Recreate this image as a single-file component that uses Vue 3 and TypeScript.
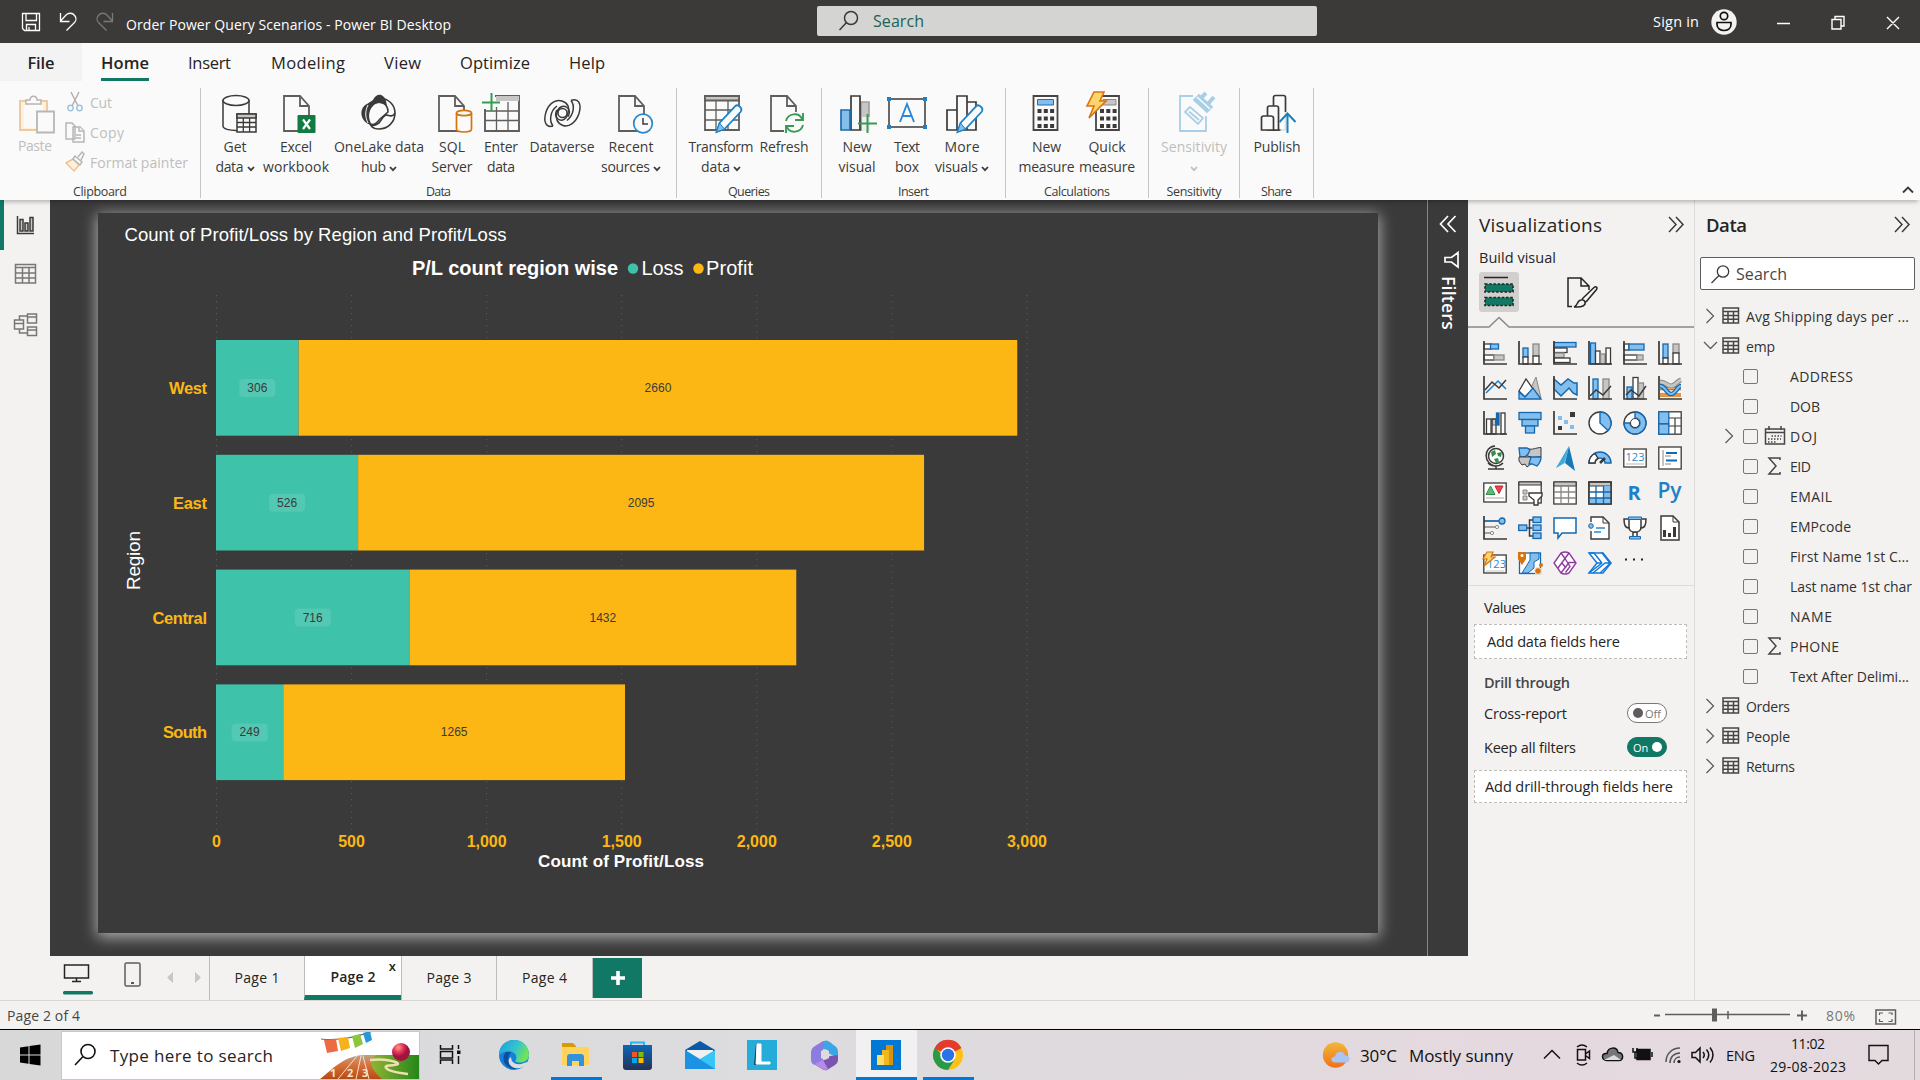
<script setup lang="ts">
interface Cmd { icon: string; w: number; l1: string; f1: number; l2?: string; f2?: number; chev?: boolean; off?: boolean }
interface Group { name: string; fit: number; w: number; pad: number; cmds: Cmd[] }

/* Spreads the letters of a label so that it fills the given width */
const vFit = {
  mounted(el: HTMLElement, binding: { value?: number }) {
    if (!binding.value) return
    const n = (el.textContent ?? '').trim().length
    if (n < 2) return
    const gap = (binding.value - el.getBoundingClientRect().width) / (n - 1)
    el.style.letterSpacing = gap + 'px'
    el.style.marginRight = -gap + 'px'
  },
}

const tabs = [
  { t: 'Home', x: 19, f: 48, on: true },
  { t: 'Insert', x: 39, f: 43 },
  { t: 'Modeling', x: 40, f: 74 },
  { t: 'View', x: 39, f: 37 },
  { t: 'Optimize', x: 39, f: 70 },
  { t: 'Help', x: 39, f: 36 },
]

const K = '#3b3a39'
const groups: Group[] = [
  { name: 'Data', fit: 25, w: 476, pad: 6, cmds: [
    { icon: 'getdata', w: 56, l1: 'Get', f1: 23, l2: 'data', f2: 28, chev: true },
    { icon: 'excel', w: 66, l1: 'Excel', f1: 32, l2: 'workbook', f2: 66 },
    { icon: 'onelake', w: 100, l1: 'OneLake data', f1: 90, l2: 'hub', f2: 25, chev: true },
    { icon: 'sql', w: 46, l1: 'SQL', f1: 26, l2: 'Server', f2: 41 },
    { icon: 'enter', w: 52, l1: 'Enter', f1: 34, l2: 'data', f2: 28 },
    { icon: 'dataverse', w: 70, l1: 'Dataverse', f1: 65 },
    { icon: 'recent', w: 68, l1: 'Recent', f1: 45, l2: 'sources', f2: 49, chev: true },
  ] },
  { name: 'Queries', fit: 42, w: 145, pad: 8, cmds: [
    { icon: 'transform', w: 72, l1: 'Transform', f1: 65, l2: 'data', f2: 29, chev: true },
    { icon: 'refresh', w: 54, l1: 'Refresh', f1: 49 },
  ] },
  { name: 'Insert', fit: 31, w: 184, pad: 11, cmds: [
    { icon: 'newvisual', w: 48, l1: 'New', f1: 29, l2: 'visual', f2: 37 },
    { icon: 'textbox', w: 52, l1: 'Text', f1: 26, l2: 'box', f2: 24 },
    { icon: 'more', w: 58, l1: 'More', f1: 35, l2: 'visuals', f2: 43, chev: true },
  ] },
  { name: 'Calculations', fit: 66, w: 143, pad: 10, cmds: [
    { icon: 'calc', w: 61, l1: 'New', f1: 29, l2: 'measure', f2: 56 },
    { icon: 'quick', w: 60, l1: 'Quick', f1: 37, l2: 'measure', f2: 56 },
  ] },
  { name: 'Sensitivity', fit: 55, w: 91, pad: 6, cmds: [
    { icon: 'sens', w: 78, l1: 'Sensitivity', f1: 66, l2: '', chev: true, off: true },
  ] },
  { name: 'Share', fit: 31, w: 74, pad: 4, cmds: [
    { icon: 'publish', w: 66, l1: 'Publish', f1: 47 },
  ] },
]

const calcKeys = (x: number) => [16, 23.5, 31].map(y => [0, 6.3, 12.6].map(d => `<rect x="${x + d}" y="${y}" width="4" height="4" fill="${K}"/>`).join('')).join('')
const page = (x: number, w = 26) => `<path d="M${x + 1} 3h${w - 10}l9 10v25h-${w - 1}z" fill="#fafafa" stroke="#605e5c" stroke-width="1.8"/><path d="M${x + w - 9} 3v10h9" fill="none" stroke="#605e5c" stroke-width="1.8"/>`
const pencil = (x: number, y: number) => `<g transform="translate(${x} ${y})"><path d="M1 27l3-9L20 1c2-2 8 2 5 6L9 24z" fill="#fafafa" stroke="#1b81c8" stroke-width="1.8"/><path d="M1 27l3-9 5 6z" fill="#83beec" stroke="#1b81c8"/></g>`

const ribbonIcons: Record<string, string> = {
  getdata: `<g fill="#fafafa" stroke="${K}" stroke-width="1.5"><path d="M8 7v26c0 6 26 6 26 0V7"/><ellipse cx="21" cy="7.5" rx="13" ry="5"/><path d="M22 21h19v18H22z"/><path d="M22 21h19v4H22z" fill="#c8c6c4"/><path d="M22 29.500h19M22 34h19M28.300 25v14M34.600 25v14" stroke-width="1.300"/></g>`,
  excel: page(7) + `<rect x="21.500" y="22" width="18" height="18" rx="1" fill="#107c41"/><path d="M27 26.500l7 9.500M34 26.500l-7 9.500" stroke="#fff" stroke-width="2.200"/>`,
  onelake: `<g fill="none" stroke="${K}" stroke-width="1.600"><path d="M21 5c10 1 15 8 15 15 0 9-7 16-16 16-3 0-6-1-8-3"/><path d="M11 14c2-4 8-6 13-4 4 2 5 6 5 9l-8 7c-3 4-6 7-10 5-5-3-5-12 0-17z" fill="#fafafa"/><path d="M36 20c-2 4-5 3-8 2-4 0-5 5-8 8-3 2-6 3-9 2" /></g><path d="M14 7c4-8 11-6 13 1l1 5c-5-4-11-4-14 0-5 5-5 13-1 19C1 30-1 15 8 11z" fill="${K}"/><path d="M9 12c-3 6-3 12 0 18" stroke="#fafafa" fill="none"/>`,
  sql: page(6) + `<g fill="#fafafa" stroke="#d8740e" stroke-width="1.700"><path d="M24.500 20v16c0 4 15 4 15 0V20"/><ellipse cx="32" cy="20" rx="7.500" ry="2.700"/></g>`,
  enter: `<g fill="#fafafa" stroke="#605e5c" stroke-width="1.900"><path d="M4 3h34v35H4z"/><path d="M15 3h23v5H15z" fill="#c8c6c4" stroke="none"/><path d="M4 18h34M4 27.500h34M15.500 14v24M27 9v29" stroke-width="1.300"/></g><path d="M0 0h14v16H0z" fill="#fafafa"/><path d="M10.500 0v18M1 9.500h18" stroke="#2f9e4f" stroke-width="2"/>`,
  dataverse: `<g fill="none" stroke="${K}" stroke-width="1.500"><path d="M29 7.500c7-3 11 3 8 13-3 9-10 14-16 12-6-2-8-8-6-13 1-5 6-8 10-5 3 2 3 6 1 9"/><path d="M11 33c-7 2-10-4-7-14 3-9 10-13 16-11 6 2 8 7 6 12-1 6-6 9-10 6-3-2-3-6-1-9"/><circle cx="20.500" cy="20" r="4.500"/><path d="M29 7.500c4 5 3 14-4 20M11 33c-4-5-3-15 4-20"/></g>`,
  recent: page(7) + `<circle cx="32" cy="30.500" r="9.300" fill="#fafafa" stroke="#2b88c8" stroke-width="1.700"/><path d="M32 25v6h5" fill="none" stroke="${K}" stroke-width="1.500"/>`,
  transform: `<g fill="#fafafa" stroke="#605e5c" stroke-width="1.800"><path d="M4 3h34v34H4z"/><path d="M4 3h34v4.500H4z" fill="#c8c6c4"/><path d="M4 17h34M4 27h34M15 8v29M27 8v29" stroke-width="1.300"/></g>` + pencil(14.500, 12),
  refresh: page(6) + `<path d="M20 19h22v22H20z" fill="#fafafa"/><g fill="none" stroke="#3a9a55" stroke-width="1.900"><path d="M22 28c2-8 13-9 16-2M39 32c-2 8-13 9-16 2"/><path d="M39 20v7h-8M22 40v-7h8"/></g>`,
  newvisual: `<g stroke-width="1.700"><path d="M24 9h8v28h-8z" fill="#c8c6c4" stroke="#a19f9d"/><path d="M14 3h9v34h-9z" fill="#fafafa" stroke="${K}"/><path d="M4 17h9v20H4z" fill="#83beec" stroke="#1f6cab"/></g><path d="M25 24h14v14H25z" fill="#fafafa" opacity=".8"/><path d="M30.500 21v19M21 30.500h19" stroke="#3a9a55" stroke-width="2"/>`,
  textbox: `<path d="M2 6h36v28H2z" fill="#fafafa" stroke="${K}" stroke-width="1.500"/><g fill="#1b81c8"><path d="M0 4h4v4H0zM36 4h4v4h-4zM0 32h4v4H0zM36 32h4v4h-4z"/></g><path d="M13 29l7-18 7 18M15.500 23h9" fill="none" stroke="#2b88d8" stroke-width="1.900"/>`,
  more: `<g fill="#fafafa" stroke="${K}" stroke-width="1.700"><path d="M25 9h9v28h-9zM15 3h10v34H15zM5 17h10v20H5z"/></g>` + pencil(14.500, 12),
  calc: `<g transform="translate(-1.500 0)"><path d="M8 3h24v34H8z" fill="#fafafa" stroke="#484644" stroke-width="1.800"/><path d="M12 6.500h16v5.500H12z" fill="#83beec" stroke="#1b6fb5"/>` + calcKeys(12) + '</g>',
  quick: `<path d="M9 3h23v34H9z" fill="#fafafa" stroke="#484644" stroke-width="1.800"/><path d="M16 6.500h13v5.500H16z" fill="#c8c6c4" stroke="#8a8886"/>` + calcKeys(13) + `<path d="M7 0h10l-4 9h6L2 26l5-12H0z" fill="#ffd56b" stroke="#d8740e" stroke-width="1.600" transform="translate(0 -1)"/>`,
  sens: `<g transform="translate(-1 0)" fill="none" stroke="#a9cfe6" stroke-width="1.800"><path d="M20 3H7v35h26V23"/><path d="M12 19l5-5 13 11-5 6z"/><path d="M16 18.500l10 8.500"/><path d="M21 7l5-5 13 12-5 5z" fill="#a9cfe6"/><path d="M27 6l6-6M33 13l8-9" stroke-width="4"/><path d="M24 4l13 12" stroke="#fafafa" stroke-width="1.600"/></g>`,
  publish: `<g transform="translate(-1.500 0)"><g fill="#fafafa" stroke="${K}" stroke-width="1.700"><path d="M18 4.500q0-2 2-2h8q2 0 2 2V37H18z"/><path d="M12 15q0-2 2-2h7q2 0 2 2v22H12z"/><path d="M6 25q0-2 2-2h7q3 0 3 2v12H6z"/></g><path d="M25 19h12v22H25z" fill="#fafafa" opacity=".85"/><path d="M32 40V22M24 29l8-8.500 8 8.500" fill="none" stroke="#1b81b8" stroke-width="2"/></g>`,
}

/* Gallery of visuals, drawn on a 24 x 24 grid */
const B = '#83beec', BS = '#1468b0', G = '#c8c6c4', GS = '#8a8886', D = '#3b3a39'
const r = (x: number, y: number, w: number, h: number, f: string, s: string) => `<rect x="${x}" y="${y}" width="${w}" height="${h}" fill="${f}" stroke="${s}" stroke-width="1.300"/>`
const axes = `<path d="M1 0v23h23" fill="none" stroke="${D}" stroke-width="1.700"/>`
const frame = (y = 2, h = 19) => r(.8, y, 22.400, h, '#fff', D)
const visuals: string[] = [
  r(1, 3, 7, 5, '#fff', D) + r(7.500, 3, 8, 5, B, BS) + r(1, 14, 10, 5, '#fff', D) + r(11, 14, 10, 5, G, GS) + axes,
  r(5, 7, 5, 9, B, BS) + r(5, 16, 5, 7, '#fff', D) + r(15, 3, 6, 12, G, GS) + r(15, 15, 6, 8, '#fff', D) + axes,
  r(1, 1.500, 22, 4.500, B, BS) + r(1, 7, 13, 4.500, '#fff', D) + r(1, 12, 10, 4.500, G, GS) + r(1, 17, 16, 4.500, '#fff', D) + axes,
  r(2.500, 2, 5, 21, B, BS) + r(7.500, 10, 4.500, 13, '#fff', D) + r(12.500, 13, 4.500, 10, G, GS) + r(18, 7, 4.500, 16, '#fff', D) + axes,
  r(1, 3, 5, 6, '#fff', D) + r(6, 3, 15, 6, B, BS) + r(1, 14, 13, 5, '#fff', D) + r(14, 14, 6, 5, G, GS) + axes,
  r(5, 3, 5, 14, B, BS) + r(5, 17, 5, 6, '#fff', D) + r(15, 3, 6, 9, G, GS) + r(15, 12, 6, 11, '#fff', D) + axes,
  `<g fill="none" stroke-width="1.500"><path d="M3 17L15 5l8 8" stroke="#1b81c8"/><path d="M2 14l7-8 7 6 7-8" stroke="${D}"/></g>` + axes,
  `<path d="M12 14L18 1l5 21z" fill="${G}" stroke="${GS}"/><path d="M1 15L8 3l7 10-8 8z" fill="#fff" stroke="${D}" stroke-width="1.300"/><path d="M1 23v-7l6 5 8-9 8 11z" fill="${B}" stroke="${BS}" stroke-width="1.300"/>`,
  `<path d="M1 3l7 6 7-6 6 4h3v12l-4-2-4-5-8 8-7-7z" fill="${B}" stroke="${BS}" stroke-width="1.500"/>` + axes,
  r(5, 3, 5, 20, B, BS) + r(15, 3, 6, 20, G, GS) + `<path d="M2 20l6-6 7 5 8-9" fill="none" stroke="${D}" stroke-width="1.500"/>` + axes,
  r(10, 1.500, 5, 21, '#fff', D) + r(15.500, 7, 5, 16, G, GS) + r(4, 11, 5, 12, B, BS) + `<path d="M3 19l5-5 8 6 7-10" fill="none" stroke="${D}" stroke-width="1.500"/>` + axes,
  `<g fill="none"><path d="M2 12.500h21M2 19h21" stroke="#d8740e" stroke-width="3.500"/><path d="M2 12.500h21M2 19h21" stroke="#f8b878" stroke-width="1"/><path d="M2 6c6 0 7 4 11 4s6-5 10-6" stroke="${GS}" stroke-width="5"/><path d="M2 6c6 0 7 4 11 4s6-5 10-6" stroke="${G}" stroke-width="3"/><path d="M2 10c6 0 6 8 11 8s6-8 10-8" stroke="${BS}" stroke-width="4.500"/><path d="M2 10c6 0 6 8 11 8s6-8 10-8" stroke="${B}" stroke-width="2"/></g>` + axes,
  r(3.500, 8, 4.500, 15, '#fff', D) + r(9, 8, 4, 6, G, GS) + r(9, 8, 4, 15, 'none', D) + r(13.500, 2, 2.500, 12, '#1468b0', BS) + r(18, 2, 4, 21, '#fff', D) + axes,
  r(1, 1.500, 22, 7, B, BS) + r(4, 8.500, 16, 6.500, B, BS) + r(7.500, 15, 9, 7, B, BS),
  `<g fill="${B}"><path d="M5 5h4v4H5zM11 9h4v4h-4zM17 14h4v4h-4z"/></g><path d="M17 1h5v5h-5zM5 15h4v4H5z" fill="${D}"/>` + axes,
  `<circle cx="12" cy="12" r="11" fill="#fff" stroke="${D}" stroke-width="1.400"/><path d="M12 1a11 11 0 0 1 8 18.500L12 12z" fill="${B}" stroke="${BS}" stroke-width="1.400"/>`,
  `<circle cx="12" cy="12" r="11" fill="#fff" stroke="${D}" stroke-width="1.300"/><path d="M12 1a11 11 0 1 1-11 11h6a5 5 0 1 0 5-5z" fill="${B}" stroke="${BS}" stroke-width="1.400"/><circle cx="12" cy="12" r="4.500" fill="#fff" stroke="${D}"/>`,
  r(.8, .8, 22.400, 22.400, '#fff', D) + r(.8, .8, 10, 12, B, BS) + r(.8, 13, 10, 10.200, B, BS) + `<path d="M11 7h12M17 7v16M11 15h6M17 15h6" stroke="${D}" stroke-width="1.200"/>`,
  `<circle cx="13" cy="10" r="7.500" fill="#fff" stroke="${D}" stroke-width="1.500"/><path d="M8 6l4-2 1 4-4 3zM14 7l5-1-1 5-3-1zM11 13l4-1 1 4-3 1z" fill="#2f8f46"/><path d="M12 0C0 1 0 18 13 20.500M20 17c-4 4-11 4-15 0M13 20v3M5 23h16" fill="none" stroke="${D}" stroke-width="1.500"/>`,
  `<path d="M10 2.500c4 2 8-1 13-1v9l-8 1-7-2z" fill="${G}" stroke="${D}"/><path d="M1 2h8l3 2-2 4-3 3H2z" fill="${B}" stroke="${BS}" stroke-width="1.300"/><path d="M1 11h12v7l-4 3-2-3-3 1-3-4z" fill="${G}" stroke="${D}"/><path d="M13 11h10c0 4-2 7-4 9l-5-2h-3z" fill="${B}" stroke="${BS}" stroke-width="1.300"/>`,
  `<path d="M16 0L3 22l9-5z" fill="#6ccbe6"/><path d="M16 0l-4 17 10 8z" fill="#1878b8"/><path d="M16 0L3 22l8-5z" fill="#2d9bd0" opacity=".7"/>`,
  `<path d="M1 17a11 11 0 0 1 22 0h-6a5 5 0 0 0-10 0z" fill="${B}" stroke="${BS}" stroke-width="1.400"/><path d="M1 17a11 11 0 0 1 6-9.500l3 5a5 5 0 0 0-3 4.500z" fill="#fff" stroke="${D}" stroke-width="1.400"/><path d="M12 17l5-5" stroke="${D}" stroke-width="2.500"/>`,
  frame(3, 18) + `<text x="12" y="14.500" text-anchor="middle" font-size="11" fill="#2b88c8">123</text><path d="M3 18h18" stroke="${G}" stroke-width="1.300"/>`,
  frame(1, 22) + `<path d="M5 4v16M7 10h6M7 18h6" stroke="${GS}"/><path d="M8 7h11M8 14.500h11" stroke="#1468b0" stroke-width="2"/>`,
  frame(2, 19) + `<path d="M3 13.500L7.500 5l4.500 8.500z" fill="#5fb878" stroke="#2f8f46"/><path d="M12 5h8l-4 7.500z" fill="#e8484b" stroke="#c4262e"/><path d="M3 17h18" stroke="${G}" stroke-width="1.500"/>`,
  frame(1, 21) + `<path d="M1 1h22v3H1z" fill="${G}" stroke="${D}"/><path d="M5 9h4v4H5zM5 15h4v4H5z" fill="${G}" stroke="${GS}"/><path d="M11 12h13v3l-4 4v5h-4v-5l-5-4z" fill="#fff" stroke="${D}" stroke-width="1.400"/>`,
  frame(1, 22) + `<path d="M1 1h22v4H1z" fill="${G}" stroke="${D}"/><path d="M1 11h22M1 17h22M8 5v18M15.500 5v18" stroke="${GS}" stroke-width="1.300"/>`,
  frame(1, 22) + `<path d="M1 1h22v4H1z" fill="${G}" stroke="${D}"/><path d="M16 5h7v18H1v-6h15z" fill="${B}"/><path d="M1 11h22M1 17h22M8 5v18M15.500 5v18" stroke="${BS}" stroke-width="1.300"/>` + `<path d="M1 1h22v22H1z" fill="none" stroke="${D}" stroke-width="1.400"/>`,
  `<text x="11" y="18.500" text-anchor="middle" font-size="20" font-weight="700" fill="#1b81c8">R</text>`,
  `<text x="-.5" y="17" font-size="21" font-weight="600" textLength="24" fill="#1b81c8">Py</text>`,
  `<path d="M1 5h15M1 11h12M1 17h7" stroke="${GS}" stroke-width="1.500"/><path d="M1 5h15" stroke="${BS}" stroke-width="1.500"/><circle cx="19" cy="5" r="3" fill="${B}" stroke="${BS}" stroke-width="1.300"/><circle cx="14" cy="11" r="1.600" fill="#fff" stroke="${GS}"/><circle cx="9" cy="17" r="1.600" fill="#fff" stroke="${GS}"/>` + axes,
  `<path d="M8 12h6M14 4h3M11.500 12V4h4M11.500 12v8h4" fill="none" stroke="${D}" stroke-width="1.500"/>` + r(.7, 9, 8, 5.500, B, BS) + r(15, 1, 8, 5.500, B, BS) + r(15, 9, 8, 5.500, B, BS) + r(15, 17, 8, 5.500, B, BS),
  `<path d="M1 2h22v15H9l-4 5v-5H1z" fill="#fff" stroke="${BS}" stroke-width="1.500"/>`,
  `<path d="M3 6V1h12l6 6v16H3v-8" fill="#fff" stroke="${D}" stroke-width="1.400"/><path d="M15 1v6h6" fill="none" stroke="${D}"/><circle cx="3" cy="10" r="2.300" fill="${B}" stroke="${BS}"/><path d="M8 12h9M6 16h7" stroke="#2b88c8" stroke-width="1.300"/>`,
  `<path d="M6 2h12v9c0 7-12 7-12 0zM6 3H1c0 6 1 9 6 9M18 3h5c0 6-1 9-6 9M10 16h4v5h-4z" fill="#fff" stroke="${D}" stroke-width="1.500"/><path d="M5.500 1h13v2.500h-13zM6.500 20.500h11V23h-11z" fill="${B}" stroke="${BS}"/>`,
  `<path d="M3 0h12l6 6v18H3z" fill="#fff" stroke="${D}" stroke-width="1.500"/><path d="M15 0v6h6" fill="none" stroke="${D}"/><path d="M5 14h3v7H5zM10 17h3v4h-3zM15 11h3v10h-3z" fill="${D}"/>`,
  frame(4, 18) + `<text x="13.500" y="17" text-anchor="middle" font-size="11" fill="#2b88c8">123</text><path d="M3 20h18" stroke="${G}"/><path d="M4 1h6L8 6h4L1 15l3-7H0z" fill="#ffd56b" stroke="#d8740e" stroke-width="1.200"/>`,
  r(1.500, 2, 21, 20.500, '#fff', BS) + `<path d="M12 2h9v6l-5 3v6l-6 5H4l5-8 3-5z" fill="${B}" stroke="${BS}"/><path d="M0 1h8v7l-4 6-4-6z" fill="#d8740e"/><circle cx="4" cy="4.500" r="1.500" fill="#fff"/><circle cx="20" cy="20" r="3.400" fill="#d8740e" stroke="#f3f2f1"/><circle cx="23" cy="14" r="2" fill="#d8740e"/>`,
  `<g fill="#fff" stroke="#8e3aa0" stroke-width="1.400"><path d="M8 2q4-2 8 0l7 10-7 10q-4 2-8 0L1 12z"/><path d="M8 2l4 5.500L16 2M8 22l8-10.500 6 0M12 7.500L5 17M12 7.500l5 8-4.500 6M9 12l4 5" fill="none"/></g>`,
  `<g fill="#fff" stroke="#1478d8" stroke-width="1.500"><path d="M1 2h14l8 10-8 10H1l8-10z"/><path d="M1 2h5l8 10M9 12h5M15 2l-1 0 8 10h-5L5 22M14 12L1 22M22.500 12L12 22" fill="none"/></g>`,
]

interface Field { t: string; f: number; top?: boolean; open?: boolean; date?: boolean; sum?: boolean }
const fields: Field[] = [
  { t: 'Avg Shipping days per ...', f: 163, top: true },
  { t: 'emp', f: 29, top: true, open: true },
  { t: 'ADDRESS', f: 63 }, { t: 'DOB', f: 30 }, { t: 'DOJ', f: 27, date: true },
  { t: 'EID', f: 21, sum: true }, { t: 'EMAIL', f: 42 }, { t: 'EMPcode', f: 61 },
  { t: 'First Name 1st C...', f: 119 }, { t: 'Last name 1st char', f: 122 }, { t: 'NAME', f: 42 },
  { t: 'PHONE', f: 49, sum: true }, { t: 'Text After Delimi...', f: 119 },
  { t: 'Orders', f: 44, top: true }, { t: 'People', f: 44, top: true }, { t: 'Returns', f: 49, top: true },
]

const unit = 0.27015
const bars = [
  { n: 'West', loss: 306, profit: 2660, w: 38 },
  { n: 'East', loss: 526, profit: 2095, w: 34 },
  { n: 'Central', loss: 716, profit: 1432, w: 54.5 },
  { n: 'South', loss: 249, profit: 1265, w: 44 },
].map((b, i) => ({ ...b, y: 127 + i * 114.800, lw: b.loss * unit, pw: b.profit * unit }))
const X0 = 118
const ticks = [0, 500, 1000, 1500, 2000, 2500, 3000].map(v => ({ x: X0 + v * unit, t: v.toLocaleString('en-US') }))
const pages: { t: string; w: number; on?: boolean }[] = [{ t: 'Page 1', w: 95 }, { t: 'Page 2', w: 97, on: true }, { t: 'Page 3', w: 95 }, { t: 'Page 4', w: 96 }]
</script>

<template>
  <div class="app">
    <header class="title">
      <svg class="qa" width="120" height="43" fill="none" stroke="#fff" stroke-width="1.300">
        <path d="M22.500 13.500h17v17h-15l-2-2zM26 14v6.500h10.500V14M26.500 30.500v-6h9v6M29 30v-3" />
        <path d="M60.500 13v8.500h9M60.500 21l6-6.500c7-4 12 4 8 8l-8 8" />
        <path d="M112.500 13v8.500h-9M112.500 21l-6-6.500c-7-4-12 4-8 8l8 8" stroke="#7a7978" />
      </svg>
      <span v-fit="325" class="doc">Order Power Query Scenarios - Power BI Desktop</span>
      <div class="tsearch">
        <svg width="22" height="22" fill="none" stroke="#3b3a39" stroke-width="1.500"><circle cx="13" cy="8" r="6.500" /><path d="M8.500 12.500L1.500 20" /></svg>
        <span v-fit="51">Search</span>
      </div>
      <span v-fit="46" class="signin">Sign in</span>
      <svg class="user" width="26" height="26" viewBox="0 0 26 26"><circle cx="13" cy="13" r="12.700" fill="#f3f2f1" /><g fill="none" stroke="#111" stroke-width="1.700"><circle cx="13" cy="7" r="3.700" /><path d="M6 13.500h14v2c0 8-14 8-14 0z" /></g></svg>
      <svg class="win" width="130" height="43" fill="none" stroke="#fff" stroke-width="1.400"><path d="M0 23.500h13M55 19.500h9v9.500h-9zM58 19v-2.500h9V26h-3M110 17l12 12M122 17l-12 12" /></svg>
    </header>

    <nav class="tabs">
      <span class="file"><span v-fit="27">File</span></span>
      <span v-for="t in tabs" :key="t.t" class="tab" :class="{ on: t.on }" :style="{ marginLeft: t.x + 'px', width: t.f + 'px' }"><span v-fit="t.f">{{ t.t }}</span></span>
    </nav>

    <section class="ribbon">
      <div class="group clip">
        <div class="cliprow">
          <div class="paste">
            <svg width="36" height="40" viewBox="0 0 36 40"><path d="M3 7h27v29H3z" fill="#fdf1dc" stroke="#efc9a0" stroke-width="2" /><path d="M7 11h19v23H7z" fill="#fafafa" /><path d="M9 10V6h4c0-5 7-5 7 0h4v4z" fill="#fafafa" stroke="#b8b6b4" stroke-width="1.500" /><path d="M20 17.500h17v21H20z" fill="#fafafa" stroke="#b8b6b4" stroke-width="1.800" /></svg>
            <span v-fit="34">Paste</span>
          </div>
          <div class="clips">
            <div><svg width="20" height="22" fill="none" stroke="#b0aeac" stroke-width="1.400"><path d="M6 1l7 14M14 1L7 15" /><circle cx="5.500" cy="17" r="2.700" stroke="#9ac4e0" /><circle cx="14.500" cy="17" r="2.700" stroke="#9ac4e0" /></svg><span v-fit="22">Cut</span></div>
            <div><svg width="20" height="22" fill="#fafafa" stroke="#b8b6b4" stroke-width="1.500"><path d="M1 2h6l3 3v13H1zM8 6h7l4 4v11H8z" /><path d="M14 6v4h5M11 14h5M11 17h5" /></svg><span v-fit="34">Copy</span></div>
            <div><svg width="20" height="22" fill="#fafafa" stroke-width="1.500"><path d="M1 12l7-4 6 6-5 6z" stroke="#efc091" fill="#fdf1dc" /><path d="M8 8l2-3 7 6-2 3zM13 6l4-5 2 2-3 6" stroke="#b8b6b4" /></svg><span v-fit="98">Format painter</span></div>
          </div>
        </div>
        <span v-fit="54" class="gname">Clipboard</span>
      </div>
      <div v-for="g in groups" :key="g.name" class="group" :style="{ width: g.w + 'px' }">
        <div class="cmds" :style="{ paddingLeft: g.pad + 'px' }">
          <div v-for="c in g.cmds" :key="c.icon" class="cmd" :class="{ off: c.off }" :style="{ width: c.w + 'px' }">
            <svg width="40" height="40" viewBox="0 0 40 40" v-html="ribbonIcons[c.icon]"></svg>
            <div class="line"><span v-fit="c.f1">{{ c.l1 }}</span></div>
            <div class="line"><span v-if="c.l2" v-fit="c.f2">{{ c.l2 }}</span><svg v-if="c.chev" class="cv" :class="{ lone: !c.l2 }" width="8" height="6"><path d="M1 1l3 3.200L7 1" fill="none" stroke="currentColor" stroke-width="1.800" /></svg></div>
          </div>
        </div>
        <span v-fit="g.fit" class="gname">{{ g.name }}</span>
      </div>
      <svg class="fold" width="12" height="8"><path d="M1 6.500l5-5 5 5" fill="none" stroke="#3b3a39" stroke-width="1.900" /></svg>
    </section>

    <main class="body">
      <aside class="rail">
        <i></i>
        <svg width="50" height="160" fill="none" stroke="#3b3a39" stroke-width="1.500">
          <path d="M17.500 16v17.500H34" /><path d="M20 19.500h3V31h-3zM25 23h3v8h-3zM30 17.500h3V31h-3z" fill="#c8c6c4" />
          <g stroke="#797775"><path d="M15.500 64.500h20V83h-20zM15.500 67.500h20M15.500 73h20M15.500 78h20M22.500 68v15M29 68v15" /><path d="M27.500 114h9v9h-9zM27.500 117h9M27.500 127h9v8.500h-9zM27.500 130h9M14.500 120h9v9h-9zM14.500 123.500h9M19.500 120v-4h8M19.500 129v4h8" /></g>
        </svg>
      </aside>

      <div class="center">
        <div class="upper">
          <div class="canvas">
            <div class="card">
              <svg width="1280" height="720" class="chart">
                <text x="26.500" y="28" font-size="18.500" fill="#fff" textLength="382">Count of Profit/Loss by Region and Profit/Loss</text>
                <text x="314" y="62" font-size="20" font-weight="700" fill="#fff" textLength="206">P/L count region wise</text>
                <circle cx="535" cy="55.500" r="5.200" fill="#3ec2aa" /><text x="543.500" y="62" font-size="20" fill="#fff" textLength="42">Loss</text>
                <circle cx="600.500" cy="55.500" r="5.200" fill="#fcb714" /><text x="608" y="62" font-size="20" fill="#fff" textLength="47">Profit</text>
                <line v-for="t in ticks" :key="t.t" :x1="t.x + .5" :x2="t.x + .5" y1="82" y2="617" stroke="#5c5c5c" stroke-dasharray="1.200 4.800" />
                <g v-for="b in bars" :key="b.n">
                  <rect :x="X0" :y="b.y" :width="b.lw" height="95.700" fill="#3ec2aa" />
                  <rect :x="X0 + b.lw" :y="b.y" :width="b.pw" height="95.700" fill="#fcb714" />
                  <text :x="109 - b.w" :y="b.y + 54" class="cat" :textLength="b.w">{{ b.n }}</text>
                  <rect :x="X0 + b.lw / 2 - 18" :y="b.y + 39" width="36" height="18" rx="4" fill="#fff" opacity=".11" />
                  <text :x="X0 + b.lw / 2" :y="b.y + 52" class="val">{{ b.loss }}</text>
                  <text :x="X0 + b.lw + b.pw / 2" :y="b.y + 52" class="val">{{ b.profit }}</text>
                </g>
                <text v-for="t in ticks" :key="t.t" :x="t.x + .5" y="634" class="tick">{{ t.t }}</text>
                <text x="440" y="654" font-size="17" font-weight="700" fill="#fff" textLength="166">Count of Profit/Loss</text>
                <text transform="translate(42 377) rotate(-90)" font-size="19" fill="#fff" textLength="59">Region</text>
              </svg>
            </div>
          </div>
          <aside class="filters">
            <svg width="18" height="18" fill="none" stroke="#fff" stroke-width="1.700"><path d="M8 1L.5 9 8 17M15.500 1L8 9l7.500 8" /></svg>
            <svg class="fun" width="17" height="18" fill="none" stroke="#fff" stroke-width="1.700"><path d="M15 1.500v14.500L8.500 11H2V6.500h6.500z" /></svg>
            <span class="vert">Filters</span>
          </aside>
        </div>
        <div class="pages">
          <svg width="159" height="44" fill="none" stroke="#252423" stroke-width="1.500">
            <path d="M14.500 9h24v13h-24zM26.500 22v3.500M22 25.500h9" /><rect x="13" y="35" width="30" height="3.500" rx="1.500" fill="#117865" stroke="none" />
            <rect x="75" y="7" width="15" height="23" rx="1.500" stroke="#605e5c" /><path d="M81 27h3" />
            <path d="M123 16v11l-6-5.500zM145 16v11l6-5.500z" fill="#c8c6c4" stroke="none" />
          </svg>
          <div v-for="p in pages" :key="p.t" class="pg" :class="{ on: p.on }" :style="{ width: p.w + 'px' }"><span v-fit="45">{{ p.t }}</span><b v-if="p.on">x</b></div>
          <div class="plus"><svg width="14" height="14"><path d="M7 0v14M0 7h14" stroke="#fff" stroke-width="3.600" /></svg></div>
        </div>
      </div>

      <aside class="viz">
        <div class="phead"><span v-fit="123">Visualizations</span><svg width="18" height="17" fill="none" stroke="#3b3a39" stroke-width="1.500"><path d="M2 1l7 7.500L2 16M9 1l7 7.500L9 16" /></svg></div>
        <div class="build"><span v-fit="77">Build visual</span></div>
        <div class="modes">
          <span class="mode"><svg width="32" height="32"><path d="M0 1.500h24" stroke="#252423" stroke-width="1.500" /><path d="M1 8h28v8H1zM1 21.500h28v8H1z" fill="#117865" stroke="#252423" stroke-width="1.600" stroke-dasharray="2.500 1.700" /></svg></span>
          <svg width="32" height="32" fill="none" stroke="#252423" stroke-width="1.500"><path d="M6 30.500H2V2h13l8 8v4M15 2v8h8" /><path d="M8 31c4-1 3-7 7-7 4-1 6 4 2 6-3 1.500-6 1-9 1zM16 23L28 11.500c2-1.500 4 0 2.500 2L20 26" /></svg>
        </div>
        <svg class="caret" width="226" height="12" fill="none" stroke="#8a8886" stroke-width="1.500"><path d="M0 10h21L31 .5l10 9.500h185" /></svg>
        <div class="grid">
          <svg v-for="(v, i) in visuals" :key="i" width="24" height="24" viewBox="0 0 24 24" v-html="v"></svg>
          <svg width="24" height="24"><path d="M2 8.500h2M10 8.500h2M18 8.500h2" stroke="#252423" stroke-width="2" /></svg>
        </div>
        <div class="wells">
          <div class="lab v1"><span v-fit="42">Values</span></div>
          <div class="well w1"><span v-fit="133">Add data fields here</span></div>
          <div class="lab drill"><span v-fit="86">Drill through</span></div>
          <div class="lab row1"><span v-fit="83">Cross-report</span><div class="tog"><i></i>Off</div></div>
          <div class="lab row2"><span v-fit="92">Keep all filters</span><div class="tog on">On<i></i></div></div>
          <div class="well w2"><span v-fit="188">Add drill-through fields here</span></div>
        </div>
      </aside>

      <aside class="data">
        <div class="phead dh"><span v-fit="41">Data</span><svg width="18" height="17" fill="none" stroke="#3b3a39" stroke-width="1.500"><path d="M2 1l7 7.500L2 16M9 1l7 7.500L9 16" /></svg></div>
        <div class="dsearch"><svg width="20" height="20" fill="none" stroke="#3b3a39" stroke-width="1.300"><circle cx="12" cy="7.500" r="5.700" /><path d="M8 11.500L.5 19" /></svg><span v-fit="51">Search</span></div>
        <div v-for="f in fields" :key="f.t" class="fld">
          <template v-if="f.top">
            <svg width="17" height="18" fill="none" stroke="#605e5c" stroke-width="1.300"><path v-if="f.open" d="M-1 5l6.500 6.500L12 5" /><path v-else d="M1.500 2l7 7-7 7" /></svg>
            <svg width="24" height="18" fill="none" stroke="#484644" stroke-width="1.500"><path d="M1 1h15.500v15H1zM1 4.500h15.500M1 8.500h15.500M1 12.300h15.500M6 5v11M11.500 5v11" /></svg>
          </template>
          <template v-else>
            <svg width="38" height="18" fill="none" stroke="#605e5c" stroke-width="1.300"><path v-if="f.date" d="M20.500 2l7 7-7 7" /></svg>
            <i class="box"></i>
            <svg width="32" height="20" fill="none" stroke="#484644" stroke-width="1.500">
              <path v-if="f.sum" d="M22 4V2H11l7 8-7 8h11v-2" />
              <g v-if="f.date"><path d="M7.500 3h19v15h-19zM7.500 6.500h19M11 0v4M23 0v4" /><path d="M13.500 10h10M10 13h13M10 16h9" stroke-dasharray="1.500 1.500" /></g>
            </svg>
          </template>
          <span v-fit="f.f">{{ f.t }}</span>
        </div>
      </aside>
    </main>

    <footer class="status">
      <span v-fit="73">Page 2 of 4</span>
      <svg width="162" height="28" stroke="#605e5c" fill="none"><path d="M3 14.500h6M146 14.500h10M151 9.500v10" stroke-width="1.900" /><path d="M14 13.500h125" stroke-width="1.300" /><path d="M63.500 7.500v13" stroke-width="5" /><path d="M77 10v8" stroke-width="1.500" /></svg>
      <span v-fit="29" class="pct">80%</span>
      <svg class="fitp" width="22" height="16" fill="none" stroke="#605e5c" stroke-width="1.500"><path d="M1 1h19.500v14H1z" /><path d="M4.500 6V4H8M13.500 4H17v2M4.500 10v2.500H8M13.500 12.500H17V10" stroke-width="1.200" /></svg>
    </footer>

    <footer class="task">
      <svg class="start" width="61" height="50"><path d="M20 17.500l8.500-1.200v8.200H20zM29.500 16.100L40.500 14.500v10h-11zM20 25.500h8.500v8.200L20 32.500zM29.500 25.500h11v10l-11-1.600z" /></svg>
      <div class="wsearch">
        <svg width="24" height="24" fill="none" stroke="#111" stroke-width="1.600"><circle cx="15" cy="8.500" r="7" /><path d="M10 13.500L2 22" /></svg>
        <span v-fit="163">Type here to search</span>
        <svg class="art" width="100" height="48" viewBox="0 0 100 48">
          <defs><linearGradient id="gr"><stop offset="0" stop-color="#9aba36" /><stop offset="1" stop-color="#23851a" /></linearGradient><linearGradient id="tr" x2="0" y2="1"><stop offset="0" stop-color="#bda38c" /><stop offset=".4" stop-color="#d8733c" /><stop offset="1" stop-color="#b84a10" /></linearGradient><radialGradient id="bl" cx=".35" cy=".25"><stop offset="0" stop-color="#ff9b80" /><stop offset=".6" stop-color="#e03058" /><stop offset="1" stop-color="#a01440" /></radialGradient></defs>
          <path d="M46 24h54v24H56z" fill="url(#gr)" /><path d="M0 48c15-12 26-25 48-24h8c-10 6-3 16 6 24z" fill="url(#tr)" />
          <path d="M18 48l19-23M36 48l5-23M49 48l-6-23" stroke="#f2e3d5" fill="none" />
          <g fill="#f2e3d5" font-size="11" font-weight="700"><text x="10" y="46">1</text><text x="27" y="46">2</text><text x="42" y="46">3</text></g>
          <path d="M50 29c15-2 28 2 28 4s-15 0-12 4 14 5 22 6" fill="none" stroke="#efe0ae" stroke-width="2.500" />
          <circle cx="81" cy="21" r="9" fill="url(#bl)" />
          <path d="M1 8c18 2 36-2 52-8" fill="none" stroke="#6a6a62" stroke-width="1.200" /><path d="M4 9l12-1 2 12-11 2z" fill="#ee6a44" /><path d="M18 7l10-1 2 11-9 3z" fill="#f4b21c" /><path d="M32 5l8-2 3 10-8 4z" fill="#8cc63c" /><path d="M43 2l7-2 2 9-6 3z" fill="#2898d8" />
        </svg>
      </div>
      <div class="apps">
        <svg width="61" height="50" fill="none" stroke="#111" stroke-width="1.500"><path d="M20.500 15v4h12v-4M20.500 34v-4h12v4M20.500 21.500h12v6.500h-12zM38.500 15v4M38.500 26v8" /><path d="M37 20.500h3.500v3.500H37z" fill="#111" stroke="none" /></svg>
        <svg width="65" height="50" viewBox="0 0 65 50"><defs><linearGradient id="e1" x2="1" y2=".4"><stop offset="0" stop-color="#1b9de0" /><stop offset=".6" stop-color="#35c3ce" /><stop offset="1" stop-color="#6fe35a" /></linearGradient></defs><circle cx="33" cy="25" r="15" fill="#1580d8" /><path d="M18 25c0-20 30-20 30 0 0 8-11 9-14 6 2-2 2-6-1-8-4-3-11-2-15 2z" fill="url(#e1)" /><path d="M25 22c-7 8 1 18 11 17-9-2-11-11-6-17z" fill="#0d4f9e" /><path d="M30 27c0 6 6 9 13 6 2-1 4-1 3 1-4 5-13 6-17 1-2-3-2-6 1-8z" fill="#dcdcde" /></svg>
        <svg width="57" height="50"><path d="M16 13h11l3 3v5H16z" fill="#d99a06" /><path d="M16 17h27v18H16z" fill="#ffd35c" /><path d="M21 36V27c0-2 1-3 3-3h11c2 0 3 1 3 3v9h-5v-5h-7v5z" fill="#3292de" /><path d="M5 47h51v3H5z" fill="#0078d7" /></svg>
        <svg class="store" width="66" height="50"><defs><linearGradient id="st" x2="0" y2="1"><stop offset="0" stop-color="#0f66b5" /><stop offset="1" stop-color="#243256" /></linearGradient></defs><path d="M23 17v-4.500h13V17" fill="none" stroke="#29b6f0" stroke-width="2" /><path d="M15 15h29v22q0 3-3 3H18q-3 0-3-3z" fill="url(#st)" /><path d="M24 22h5v5h-5z" fill="#f35325" /><path d="M30.500 22h5v5h-5z" fill="#81bc06" /><path d="M24 28h5v5h-5z" fill="#05a6f0" /><path d="M30.500 28h5v5h-5z" fill="#ffba08" /></svg>
        <svg width="61" height="50"><path d="M11 20l15-9 15 9v4H11z" fill="#0a5aa8" /><path d="M13 20h26v10H13z" fill="#f0f0f2" /><path d="M11 20l15 9 15-9v19H11z" fill="#36c5f4" /><path d="M11 20l30 19H11z" fill="#1b93e2" /></svg>
        <svg width="63" height="50"><path d="M12 10h30v30H12z" fill="#25acd8" /><path d="M21 14h5v19l-7 2z" fill="#0b3560" /><path d="M22 14h4v18h9v2H21z" fill="#fff" stroke="#fff" /></svg>
        <svg width="58" height="50" viewBox="0 0 58 50"><path d="M25 11l-8 5q-4 2-4 7v7q0 4 4 5l8-4V18l9-5z" fill="#8c7ce0" /><path d="M26 11q2-1 4 0l7 5q3 2 3 6v6l-8-4-7-5z" fill="#3aa6e6" /><path d="M40 25v5q0 3-3 5l-8 5q-2 1-5-1l-8-5 8-3 8-5z" fill="#7a55b0" /><path d="M16 34l9-4 5 9q-3 2-6 0z" fill="#b88ae8" /><path d="M23 21l4-2 4 2v7l-4 2-4-2z" fill="#dcdbdd" /></svg>
        <div class="act"><svg width="61" height="50"><path d="M15 10h30v30H15z" fill="#0078d4" /><path d="M30 15h7v20h-7z" fill="#d9920e" /><path d="M26 20h7v15h-7z" fill="#f0b81c" /><path d="M21 25h7v10h-7z" fill="#fbdf68" /></svg></div>
        <svg width="60" height="50" viewBox="0 0 60 50"><circle cx="31" cy="25" r="15" fill="#fbc116" /><path d="M31 25L17.500 18.500A15 15 0 0 1 44.500 18z" fill="#e33b2e" /><path d="M18 17.500A15 15 0 0 0 31 40l7-11-7 2z" fill="#2a9a48" /><circle cx="31" cy="25" r="7.800" fill="#fff" /><circle cx="31" cy="25" r="6.200" fill="#2a72e8" /><path d="M6 47h51v3H6z" fill="#0078d7" /></svg>
      </div>
      <svg class="sun" width="32" height="50"><defs><linearGradient id="sn" x2="0" y2="1"><stop offset="0" stop-color="#f0b83a" /><stop offset="1" stop-color="#f3701a" /></linearGradient></defs><circle cx="13.500" cy="25" r="12.700" fill="url(#sn)" /><path d="M13 32.500c-5 0-5-6 0-6 1-6 9-6 10-1 6 0 6 7 1 7z" fill="#a9c4f5" /></svg>
      <span v-fit="37" class="w18">30°C</span>
      <span v-fit="104" class="w18 ms">Mostly sunny</span>
      <svg class="tray" width="184" height="50" fill="none" stroke="#111" stroke-width="1.500">
        <path d="M2 28.500l8-8 8 8" />
        <path d="M35.500 19.500h8v10.500h-8zM43.500 24l4-3v7.500l-4-3M35 17c3-2.500 7-2.500 10 0M35 33c3 2.500 7 2.500 10 0" />
        <path d="M65 30.500c-6 0-6-8 0-7 1-7 10-7 11-1 6 0 6 8 1 8z" fill="#777" /><path d="M62 30l10-5 7 5z" fill="#ddd" stroke="none" />
        <path d="M95 19.500h13v10H95z" fill="#111" /><path d="M110 22v5M91 18v4h4v-4M93 22v6h3" />
        <path d="M124 32c0-8 6-14 14-14M128 33c0-6 4-10 10-10M132 33c0-3 2-6 6-6" stroke="#555" /><circle cx="137" cy="31.500" r="1.600" fill="#111" stroke="none" />
        <path d="M150 22.500h3.500l4.500-4.500v14l-4.500-4.500H150zM161 22q2.500 3 0 6M164.500 19.500q4.500 5.500 0 11M168 17.500q6 7.500 0 15" />
      </svg>
      <span v-fit="29" class="eng">ENG</span>
      <div class="clock"><span v-fit="34">11:02</span><span v-fit="76">29-08-2023</span></div>
      <svg class="note" width="22" height="50" fill="none" stroke="#111" stroke-width="1.400"><path d="M1 15.500h19v15h-6L10.500 34 7 30.500H1z" /></svg>
      <i class="peek"></i>
    </footer>
  </div>
</template>

<style>
body { margin: 0; overflow: hidden; }
</style>

<style scoped>
.app, .app * { box-sizing: border-box; }
.app { width: 1920px; height: 1080px; display: flex; flex-direction: column; background: #f3f2f1; color: #252423; font: 14px 'Open Sans', 'Noto Sans', sans-serif; white-space: nowrap; overflow: hidden; }
svg { display: block; flex: none; overflow: visible; }
span { display: inline-block; flex: none; }
.title { height: 43px; background: #3b3a38; color: #fff; display: flex; align-items: center; flex: none; }
.qa { margin-right: 6px; }
.doc { font-size: 14px; padding-top: 6px; }
.tsearch { margin-left: 366px; width: 500px; height: 30px; background: #d4d4d2; border-radius: 2px; display: flex; align-items: center; gap: 13px; padding-left: 21px; color: #1d6254; font-size: 16px; margin-top: -1px; }
.signin { margin-left: 336px; font-size: 14.500px; }
.user { margin-left: 12px; }
.win { margin-left: 40px; }
.tabs { height: 38px; background: #fafafa; display: flex; flex: none; font-size: 16.500px; }
.file { width: 82px; background: #f3f3f3; text-align: center; line-height: 39px; font-weight: 600; }
.tab { height: 38px; line-height: 39px; }
.tab.on { border-bottom: 3px solid #117865; font-weight: 600; }
.ribbon { height: 119px; background: #fafafa; display: flex; padding-top: 7px; flex: none; position: relative; z-index: 2; box-shadow: 0 4px 4px -2px rgba(0, 0, 0, .25); }
.group { height: 110px; border-right: 1px solid #c8c6c4; display: flex; flex-direction: column; align-items: center; flex: none; }
.gname { font-size: 12.500px; line-height: 16px; margin-top: auto; margin-bottom: -2px; color: #3b3a39; }
.cmds { display: flex; width: 100%; padding-top: 5px; }
.cmd { display: flex; flex-direction: column; align-items: center; flex: none; font-size: 14px; color: #3b3a39; }
.cmd svg + .line { margin-top: 4px; }
.line { display: flex; align-items: center; height: 20px; line-height: 20px; }
.cv { margin-left: 3px; margin-top: 4px; }
.cv.lone { margin-left: 0; }
.off { color: #c0bebc; }
.clip { width: 201px; }
.cliprow { display: flex; width: 100%; padding: 6px 0 0 17px; color: #c0bebc; }
.paste { display: flex; flex-direction: column; align-items: center; gap: 2px; line-height: 20px; width: 36px; }
.clips { margin-left: 12px; display: flex; flex-direction: column; gap: 8px; margin-top: -3px; }
.clips div { display: flex; align-items: center; gap: 5px; height: 22px; }
.fold { margin: 98px 0 0 588px; }
.body { height: 801px; display: flex; flex: none; border-bottom: 1px solid #d8d6d4; }
.rail { width: 50px; display: flex; flex: none; }
.rail i { width: 4px; height: 50px; background: #117865; margin-right: -4px; }
.center { width: 1418px; display: flex; flex-direction: column; flex: none; }
.upper { display: flex; height: 756px; background: #3a3a3a; }
.canvas { width: 1377px; padding: 13px 0 0 48px; overflow: hidden; }
.card { width: 1280px; height: 720px; background: #3a3a3a; box-shadow: 0 3px 14px 1px #b0b0b0; }
.chart { font-family: 'Liberation Sans', Arial, sans-serif; }
.cat { font-size: 16.500px; font-weight: 700; fill: #fcb714; }
.tick { font-size: 16px; font-weight: 700; fill: #fcb714; text-anchor: middle; }
.val { font-size: 12px; fill: #3a3a3a; text-anchor: middle; }
.filters { width: 41px; border-left: 1px solid #8a8886; display: flex; flex-direction: column; padding: 15px 0 0 12px; color: #fff; }
.fun { margin: 18px 0 0 3px; }
.vert { writing-mode: vertical-rl; font-size: 17.500px; font-weight: 600; line-height: 24px; margin: 7px 0 0 -3px; width: 24px; letter-spacing: .25px; }
.pages { height: 44px; display: flex; }
.pg { display: flex; align-items: center; justify-content: center; border-left: 1px solid #bebcba; font-size: 14px; position: relative; padding-bottom: 1px; }
.pg.on { background: #fff; border-bottom: 5px solid #117865; padding-top: 3px; font-weight: 600; }
.pg b { position: absolute; right: 5px; top: 1px; font-size: 13px; font-weight: 600; }
.plus { width: 50px; height: 40px; margin-top: 2px; background: #117865; border-left: 1px solid #bebcba; display: flex; align-items: center; justify-content: center; }
.viz { width: 227px; flex: none; border-right: 1px solid #dddbd9; }
.phead { display: flex; justify-content: space-between; align-items: center; height: 49px; padding: 0 9px 0 11px; font-size: 19px; font-weight: 500; }
.build { height: 23px; line-height: 17px; padding-left: 11px; font-size: 14.500px; }
.modes { display: flex; align-items: center; padding-left: 11px; gap: 47px; height: 40px; }
.mode { width: 40px; height: 40px; background: #d2d0ce; border-radius: 3px; padding: 4px 0 0 5px; }
.caret { margin-top: 5px; }
.grid { display: grid; grid-template-columns: repeat(6, 24px); grid-auto-rows: 24px; align-content: start; column-gap: 11px; row-gap: 11px; padding: 12px 0 0 15px; height: 257px; border-bottom: 1px solid #dddbd9; }
.wells { font-size: 14.500px; padding: 0 7px 0 6px; }
.lab { display: flex; align-items: center; justify-content: space-between; padding: 0 20px 0 10px; }
.v1 { height: 38px; padding-top: 4px; }
.well { background: #fff; border: 1px dashed #bebbb8; display: flex; align-items: center; }
.w1 { height: 35px; padding-left: 12px; }
.w2 { height: 33px; padding-left: 10px; margin-top: 6px; }
.drill { height: 28px; margin-top: 9px; font-weight: 600; color: #484644; }
.row1 { height: 34px; }
.row2 { height: 34px; }
.tog { width: 40px; height: 20px; border: 1px solid #797775; border-radius: 10px; background: #fff; display: flex; align-items: center; gap: 2px; padding-left: 5px; font-size: 11px; color: #797775; }
.tog i { width: 10px; height: 10px; border-radius: 50%; background: #605e5c; }
.tog.on { background: #117865; border-color: #117865; color: #fff; gap: 4px; }
.tog.on i { background: #fff; }
.data { width: 225px; flex: none; }
.dh { font-weight: 600; font-size: 18.500px; }
.dsearch { margin: 8px 0 11px 5px; width: 215px; height: 33px; background: #fff; border: 1px solid #605e5c; border-radius: 2px; display: flex; align-items: center; gap: 5px; padding-left: 10px; font-size: 16px; color: #484644; }
.fld { height: 30px; display: flex; align-items: center; padding-left: 10px; font-size: 14px; color: #323130; }
.box { width: 15px; height: 15px; border: 1px solid #797775; border-radius: 2px; flex: none; }
.status { height: 28px; display: flex; align-items: center; padding-left: 7px; font-size: 14px; color: #484644; flex: none; }
.status svg { margin-left: 1571px; }
.status .pct { margin-left: 13px; color: #797775; }
.status .fitp { margin-left: 20px; margin-top: 3px; }
.task { height: 51px; border-top: 1px solid #000; background: linear-gradient(90deg, #d8d8d9, #dcdcde 35%, #dfdadd 60%, #e5d9e0 80%, #e3dade); display: flex; align-items: center; color: #111; flex: none; }
.wsearch { width: 359px; height: 49px; background: #fff; border: 1px solid #c8c6c8; display: flex; align-items: center; padding-left: 11px; font-size: 17px; color: #252423; gap: 13px; flex: none; overflow: hidden; }
.art { margin-left: 34px; }
.apps { display: flex; flex: none; }
.store { margin-left: 5px; }
.act { width: 61px; height: 50px; background: #f1f1f1; border-bottom: 3px solid #0078d7; }
.sun { margin-left: 345px; }
.w18 { font-size: 17px; margin-left: 6px; }
.w18.ms { margin-left: 12px; }
.tray { margin-left: 29px; }
.eng { font-size: 14.500px; }
.clock { display: flex; flex-direction: column; align-items: center; width: 76px; margin-left: 15px; font-size: 14px; line-height: 23px; }
.note { margin-left: 22px; }
.peek { width: 1px; height: 50px; background: #b5afb3; margin-left: 24px; }
</style>
